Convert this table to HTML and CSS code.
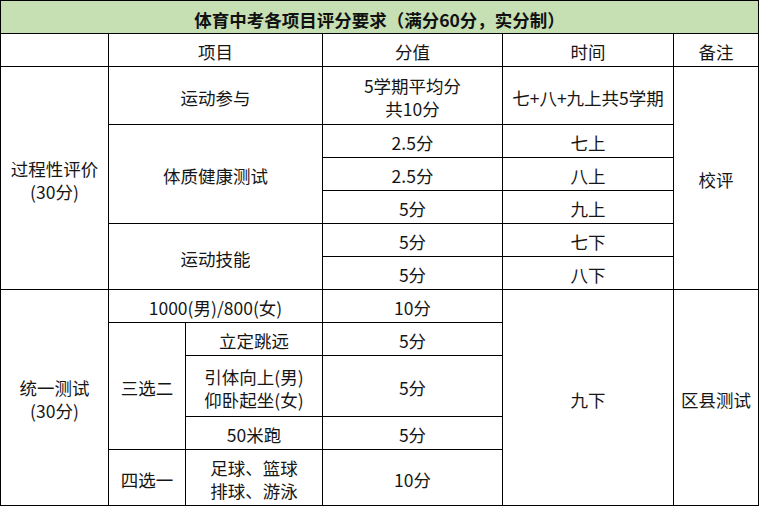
FILE: index.html
```html
<!DOCTYPE html>
<html lang="zh-CN">
<head>
<meta charset="utf-8">
<title>体育中考各项目评分要求</title>
<link rel="stylesheet" href="styles.css">
</head>
<body>
<table class="score">
  <colgroup>
    <col class="c0"><col class="c1"><col class="c2"><col class="c3"><col class="c4"><col class="c5">
  </colgroup>
  <tr class="r33"><td class="title" colspan="6">体育中考各项目评分要求（满分60分，实分制）</td></tr>
  <tr class="r33"><td></td><td colspan="2">项目</td><td>分值</td><td>时间</td><td>备注</td></tr>
  <tr class="r58"><td rowspan="6">过程性评价<br>(30分)</td><td colspan="2">运动参与</td><td>5学期平均分<br>共10分</td><td>七+八+九上共5学期</td><td rowspan="6">校评</td></tr>
  <tr class="r33"><td colspan="2" rowspan="3">体质健康测试</td><td>2.5分</td><td>七上</td></tr>
  <tr class="r33"><td>2.5分</td><td>八上</td></tr>
  <tr class="r33"><td>5分</td><td>九上</td></tr>
  <tr class="r33"><td colspan="2" rowspan="2">运动技能</td><td>5分</td><td>七下</td></tr>
  <tr class="r33"><td>5分</td><td>八下</td></tr>
  <tr class="r33"><td rowspan="5">统一测试<br>(30分)</td><td colspan="2">1000(男)/800(女)</td><td>10分</td><td rowspan="5">九下</td><td rowspan="5">区县测试</td></tr>
  <tr class="r33"><td rowspan="3">三选二</td><td>立定跳远</td><td>5分</td></tr>
  <tr class="r61"><td>引体向上(男)<br>仰卧起坐(女)</td><td>5分</td></tr>
  <tr class="r33"><td>50米跑</td><td>5分</td></tr>
  <tr class="r56"><td>四选一</td><td>足球、篮球<br>排球、游泳</td><td>10分</td></tr>
</table>
</body>
</html>
```

FILE: styles.css
```css
html, body {
  margin: 0;
  padding: 0;
  background: #ffffff;
}

.score {
  border-collapse: collapse;
  table-layout: fixed;
  width: 758px;
  font-family: "Noto Sans CJK SC", "Microsoft YaHei", sans-serif;
  font-size: 17.5px;
  line-height: 23px;
  color: #161616;
}

.c0 { width: 108px; }
.c1 { width: 77px; }
.c2 { width: 137px; }
.c3 { width: 180px; }
.c4 { width: 171px; }
.c5 { width: 85px; }

.score td {
  border: 1px solid #000000;
  padding: 3px 0 0 0;
  text-align: center;
  vertical-align: middle;
  white-space: nowrap;
}

.r33 { height: 33px; }
.r58 { height: 58px; }
.r61 { height: 61px; }
.r56 { height: 56px; }

.score td.title {
  background: #c6e0b4;
  font-weight: 700;
  font-size: 17.5px;
  padding-top: 5px;
  color: #111111;
}
```
